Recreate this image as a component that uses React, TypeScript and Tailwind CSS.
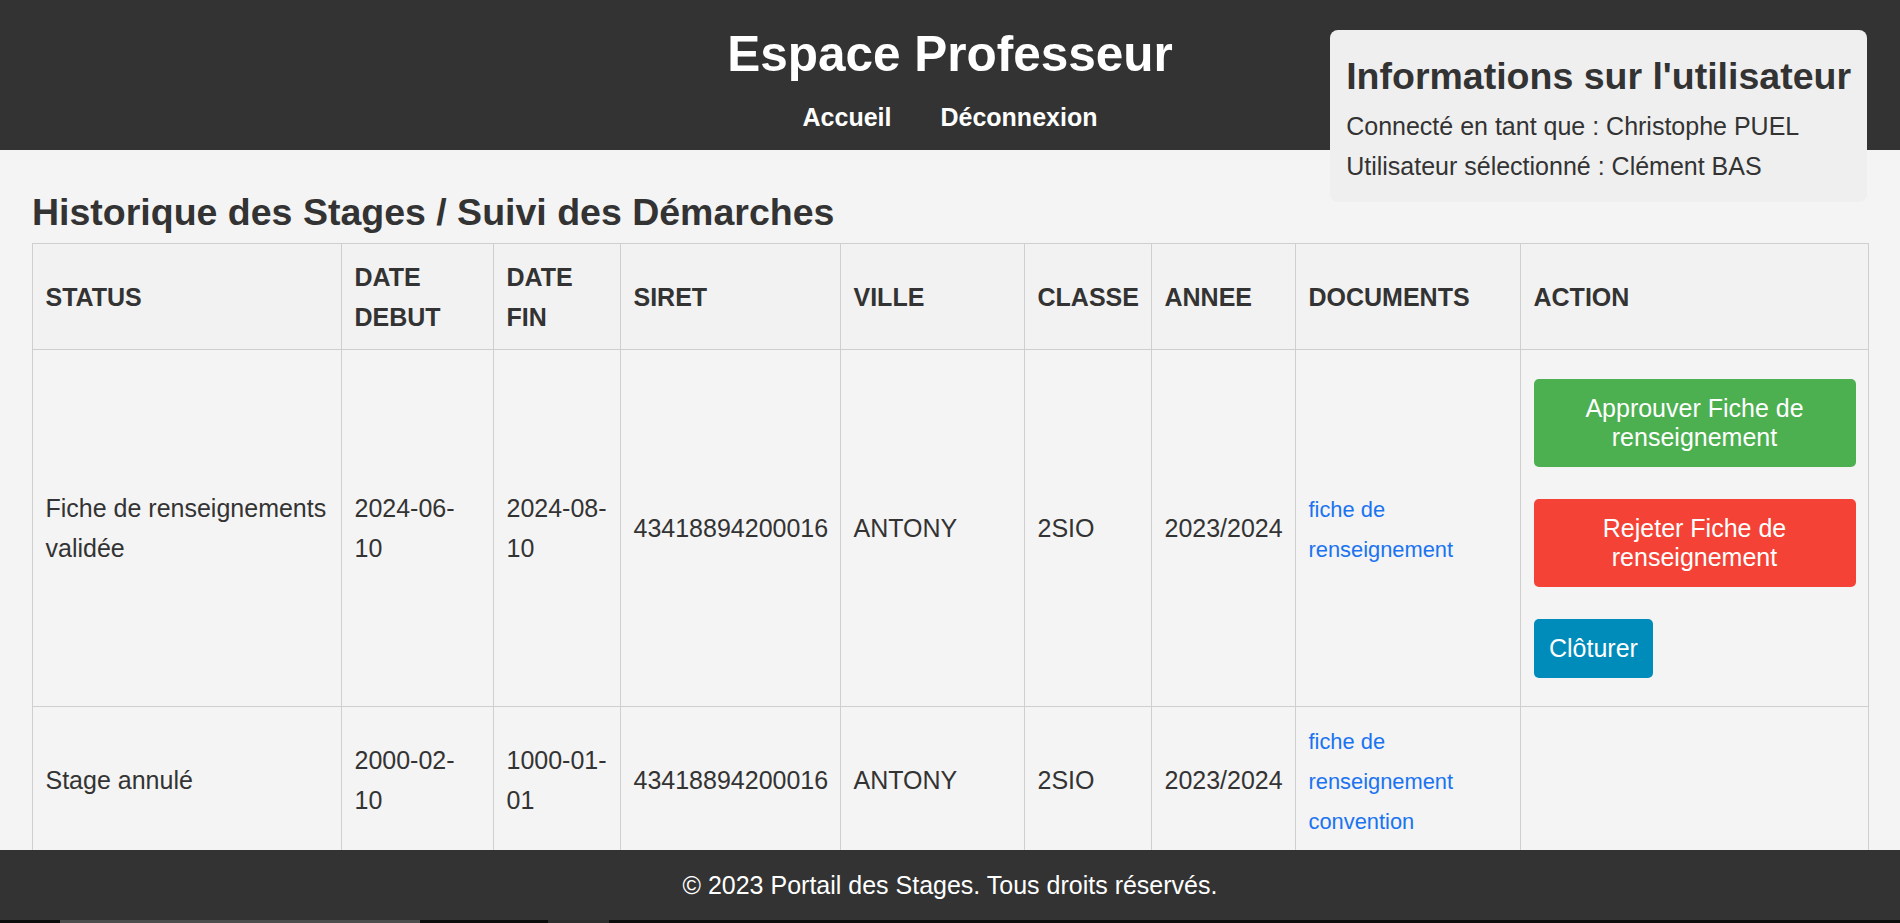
import React from 'react';

type Row = {
  status: string;
  debut: string;
  fin: string;
  siret: string;
  ville: string;
  classe: string;
  annee: string;
  docs: string[];
  actions: boolean;
};

const rows: Row[] = [
  {
    status: 'Fiche de renseignements validée',
    debut: '2024-06-10',
    fin: '2024-08-10',
    siret: '43418894200016',
    ville: 'ANTONY',
    classe: '2SIO',
    annee: '2023/2024',
    docs: ['fiche de renseignement'],
    actions: true,
  },
  {
    status: 'Stage annulé',
    debut: '2000-02-10',
    fin: '1000-01-01',
    siret: '43418894200016',
    ville: 'ANTONY',
    classe: '2SIO',
    annee: '2023/2024',
    docs: ['fiche de renseignement', 'convention'],
    actions: false,
  },
];

const headers = ['STATUS', 'DATE DEBUT', 'DATE FIN', 'SIRET', 'VILLE', 'CLASSE', 'ANNEE', 'DOCUMENTS', 'ACTION'];

export default function App() {
  return (
    <div className="relative h-[923px] overflow-hidden bg-[#f4f4f4] font-['Liberation_Sans',Arial,sans-serif] text-[25px] leading-[40px] text-[#333]">
      {/* Header */}
      <header className="flex h-[150px] flex-col items-center bg-[#333] pt-[26px] text-white">
        <h1 className="text-[49.5px] font-bold leading-[56px]">Espace Professeur</h1>
        <nav className="mt-[15px] flex gap-[49px] font-bold">
          <a href="#">Accueil</a>
          <a href="#">Déconnexion</a>
        </nav>
      </header>

      {/* User info */}
      <div className="absolute right-[33px] top-[30px] rounded-lg bg-[#efefef] px-[16px] pb-[16px] pt-[24px]">
        <h2 className="mb-[7px] text-[37.5px] font-bold leading-[45px]">Informations sur l'utilisateur</h2>
        <p>Connecté en tant que : Christophe PUEL</p>
        <p>Utilisateur sélectionné : Clément BAS</p>
      </div>

      {/* Historique */}
      <main className="px-[32px] pt-[40px]">
        <h2 className="mb-[8px] text-[37.5px] font-bold leading-[45px]">Historique des Stages / Suivi des Démarches</h2>
        <table className="w-full table-fixed border-collapse">
          <colgroup>
            <col className="w-[309px]" />
            <col className="w-[152px]" />
            <col className="w-[127px]" />
            <col className="w-[220px]" />
            <col className="w-[184px]" />
            <col className="w-[127px]" />
            <col className="w-[144px]" />
            <col className="w-[225px]" />
            <col className="w-[348px]" />
          </colgroup>
          <thead>
            <tr className="bg-[#f2f2f2]">
              {headers.map((h) => (
                <th key={h} className="border border-[#cfcfcf] p-[12.5px] text-left align-middle font-bold">
                  {h}
                </th>
              ))}
            </tr>
          </thead>
          <tbody>
            {rows.map((r, i) => (
              <tr key={i}>
                <td className="border border-[#cfcfcf] p-[12.5px] align-middle">{r.status}</td>
                <td className="border border-[#cfcfcf] p-[12.5px] align-middle">{r.debut}</td>
                <td className="border border-[#cfcfcf] p-[12.5px] align-middle">{r.fin}</td>
                <td className="border border-[#cfcfcf] p-[12.5px] align-middle">{r.siret}</td>
                <td className="border border-[#cfcfcf] p-[12.5px] align-middle">{r.ville}</td>
                <td className="border border-[#cfcfcf] p-[12.5px] align-middle">{r.classe}</td>
                <td className="border border-[#cfcfcf] p-[12.5px] align-middle">{r.annee}</td>
                <td className="border border-[#cfcfcf] p-[12.5px] align-middle">
                  {r.docs.map((d, j) => (
                    <React.Fragment key={d}>
                      {j > 0 && <br />}
                      <a href="#" className="text-[21.875px] leading-[35px] text-[#1a73f0]">
                        {d}
                      </a>
                    </React.Fragment>
                  ))}
                </td>
                <td className="border border-[#cfcfcf] p-[12.5px] align-middle">
                  {r.actions && (
                    <div className="flex flex-col items-start gap-[32px] py-[16px] leading-[29px] text-white">
                      <button className="w-full rounded-[5px] bg-[#4caf50] px-[15px] py-[15px] text-center">
                        Approuver Fiche de renseignement
                      </button>
                      <button className="w-full rounded-[5px] bg-[#f44336] px-[15px] py-[15px] text-center">
                        Rejeter Fiche de renseignement
                      </button>
                      <button className="rounded-[5px] bg-[#008cba] px-[15.5px] py-[15px]">Clôturer</button>
                    </div>
                  )}
                </td>
              </tr>
            ))}
          </tbody>
        </table>
      </main>

      {/* Footer */}
      <footer className="absolute bottom-[3px] left-0 right-0 flex h-[70px] items-center justify-center bg-[#333] text-white">
        © 2023 Portail des Stages. Tous droits réservés.
      </footer>
      <div className="absolute bottom-0 left-0 right-0 flex h-[3px] bg-[#0c0c0c]">
        <div className="w-[60px]" />
        <div className="w-[360px] bg-[#4d4d4d]" />
        <div className="w-[128px]" />
        <div className="w-[61px] bg-[#2e2e2e]" />
      </div>
    </div>
  );
}
